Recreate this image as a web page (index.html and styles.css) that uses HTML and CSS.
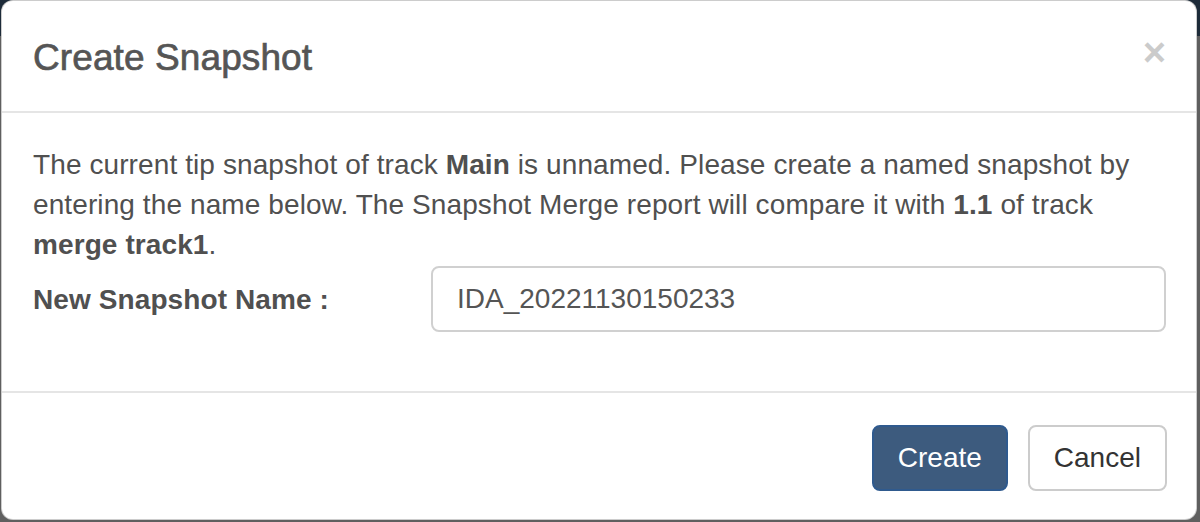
FILE: index.html
```html
<!DOCTYPE html>
<html lang="en">
<head>
<meta charset="utf-8">
<title>Create Snapshot</title>
<link rel="stylesheet" href="styles.css">
</head>
<body>
<div class="backdrop">
  <div class="modal">
    <div class="modal-header">
      <h4 class="modal-title">Create Snapshot</h4>
      <button class="close" type="button" aria-label="Close">&times;</button>
    </div>
    <div class="modal-body">
      <p class="intro">The current tip snapshot of track <b>Main</b> is unnamed. Please create a named snapshot by entering the name below. The Snapshot Merge report will compare it with <b>1.1</b> of track <b>merge track1</b>.</p>
      <div class="form-row">
        <label class="form-label" for="snap">New Snapshot Name :</label>
        <input class="form-input" id="snap" type="text" value="IDA_20221130150233">
      </div>
    </div>
    <div class="modal-footer">
      <button class="btn btn-primary" type="button">Create</button>
      <button class="btn btn-default" type="button">Cancel</button>
    </div>
  </div>
</div>
</body>
</html>
```

FILE: styles.css
```css
html, body {
  margin: 0;
  padding: 0;
  height: 100%;
}

body {
  background: linear-gradient(to bottom, #1d2b39 0, #1d2b39 36px, #5f5f5f 36px, #5f5f5f 100%);
  font-family: "Liberation Sans", Arial, Helvetica, sans-serif;
  overflow: hidden;
}

.backdrop {
  display: flex;
  padding: 0 3px 2px 1px;
  height: 522px;
  box-sizing: border-box;
}

.modal {
  flex: 1;
  display: flex;
  flex-direction: column;
  background: #fff;
  border: 1px solid rgba(0, 0, 0, 0.2);
  border-radius: 12px;
  box-sizing: border-box;
  overflow: hidden;
}

.modal-header {
  display: flex;
  align-items: center;
  justify-content: space-between;
  padding: 0 30px 0 31px;
  height: 112px;
  border-bottom: 2px solid #e5e5e5;
  box-sizing: border-box;
}

.modal-title {
  margin: 4px 0 0 0;
  font-size: 37px;
  font-weight: normal;
  line-height: 40px;
  color: #555;
  letter-spacing: 0.1px;
  -webkit-text-stroke: 0.7px #555;
}

.close {
  border: 0;
  background: transparent;
  padding: 0;
  margin: -8px 0 0 0;
  font-family: "Liberation Sans", Arial, sans-serif;
  font-size: 40px;
  font-weight: bold;
  line-height: 1;
  color: #000;
  opacity: 0.2;
}

.modal-body {
  padding: 32px 30px 0 31px;
  color: #505050;
  font-size: 28px;
  line-height: 40px;
  letter-spacing: 0.1px;
  height: 280px;
  box-sizing: border-box;
  border-bottom: 2px solid #e5e5e5;
}

.intro {
  margin: 0;
}

.form-row {
  display: grid;
  grid-template-columns: 338px 1fr;
  column-gap: 60px;
  align-items: center;
  margin-top: 1px;
}

.form-label {
  font-weight: bold;
  color: #505050;
  padding-top: 2px;
}

.form-input {
  height: 66px;
  box-sizing: border-box;
  padding: 12px 24px;
  border: 2px solid #d0d0d0;
  border-radius: 8px;
  font-family: "Liberation Sans", Arial, sans-serif;
  font-size: 28px;
  color: #555;
  background: #fff;
  outline: none;
  width: 100%;
  margin: 0;
}

.modal-footer {
  flex: 1;
  display: flex;
  justify-content: flex-end;
  align-items: flex-start;
  gap: 20px;
  padding: 32px 29px 0 30px;
}

.btn {
  height: 66px;
  padding: 0 24px;
  font-family: "Liberation Sans", Arial, sans-serif;
  font-size: 28px;
  line-height: 40px;
  border-radius: 8px;
  box-sizing: border-box;
}

.btn-primary {
  background: #3d5b7e;
  border: 2px solid #2f5a8e;
  color: #fff;
  min-width: 134px;
}

.btn-default {
  background: #fff;
  border: 2px solid #cccccc;
  color: #333;
  min-width: 138px;
}
```
